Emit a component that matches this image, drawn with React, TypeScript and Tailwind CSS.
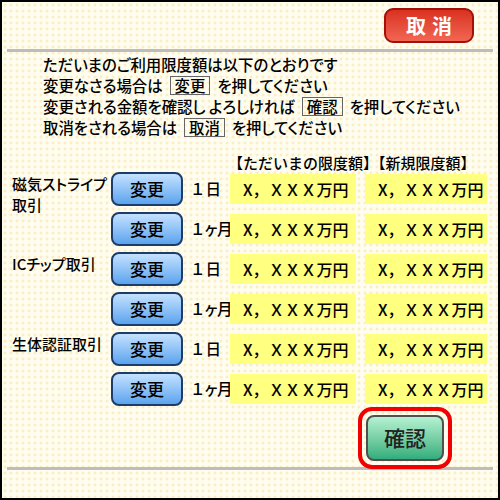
const rows = [
  { label: "磁気ストライプ", label2: "取引", period: "day" },
  { period: "month" },
  { label: "ICチップ取引", period: "day" },
  { period: "month" },
  { label: "生体認証取引", period: "day" },
  { period: "month" },
];

function InlineBox({ children }: { children: React.ReactNode }) {
  return (
    <span className="mx-[7px] inline-block border border-[#666] px-[4px] leading-[17px]">
      {children}
    </span>
  );
}

function AmountCell({ className }: { className: string }) {
  return (
    <div className={"flex h-[30px] items-center bg-[#ffff80] pl-[13px] text-[16px] " + className}>
      X，ＸＸＸ万円
    </div>
  );
}

export default function App() {
  return (
    <div className="h-[500px] w-[500px] border-2 border-black bg-[#fffdf0] bg-[radial-gradient(circle,#fbedc6_1.2px,transparent_1.8px)] bg-[length:6px_6px] px-[5px] font-['Noto_Sans_CJK_JP',sans-serif] font-medium text-black">
      <div className="flex justify-end pr-[19px] pt-[6px]">
        <button className="flex h-[35px] w-[90px] items-center justify-center rounded-[9px] border-2 border-[#a3100a] bg-gradient-to-b from-[#d9301f] to-[#f26552] text-[20px] font-bold tracking-[6px] text-white">
          <span className="pl-[6px]">取消</span>
        </button>
      </div>
      <div className="mt-[6px] h-[3px] bg-[#bdbdbd]" />

      <div className="mt-[2px] pl-[36px] text-[15.4px] leading-[21px] [font-feature-settings:'palt']">
        <p>ただいまのご利用限度額は以下のとおりです</p>
        <p>
          変更なさる場合は<InlineBox>変更</InlineBox>を押してください
        </p>
        <p>
          変更される金額を確認し よろしければ<InlineBox>確認</InlineBox>を押してください
        </p>
        <p>
          取消をされる場合は<InlineBox>取消</InlineBox>を押してください
        </p>
      </div>

      <div className="mt-[15px] pl-[221px] text-[15px] leading-[19px]">
        【ただいまの限度額】【新規限度額】
      </div>

      <div className="pl-[5px]">
        {rows.map((row, i) => (
          <div key={i} className="flex h-[40px] items-start">
            <div className="w-[99px] whitespace-nowrap pt-[1px] text-[15px] leading-[21px] [font-feature-settings:'palt']">
              {row.label && <div>{row.label}</div>}
              {row.label2 && <div>{row.label2}</div>}
            </div>
            <div className="flex h-[34px] items-center">
              <button className="h-[34px] w-[72px] rounded-[8px] border-2 border-[#1c3c6c] bg-gradient-to-b from-[#c4e2ff] to-[#5aa3ee] text-[17px]">
                変更
              </button>
              <div className="w-[47px] whitespace-nowrap pl-[7px] text-[15.5px]">
                {row.period === "day" ? (
                  "１日"
                ) : (
                  <span className="tracking-[-2px]">１ヶ月</span>
                )}
              </div>
              <AmountCell className="w-[126px]" />
              <AmountCell className="ml-[9px] w-[122px]" />
            </div>
          </div>
        ))}
      </div>

      <div className="-mt-[5px] flex justify-end pr-[41px]">
        <div className="relative z-10 rounded-[14px] border-[4px] border-[#f00000] p-[4px]">
          <button className="flex h-[46px] w-[78px] items-center justify-center rounded-[8px] border-2 border-[#505050] bg-gradient-to-b from-[#b4f2d2] to-[#2fae7c] text-[21px] text-[#222]">
            確認
          </button>
        </div>
      </div>
      <div className="-mt-[2px] h-[3px] bg-[#bdbdbd]" />
    </div>
  );
}
